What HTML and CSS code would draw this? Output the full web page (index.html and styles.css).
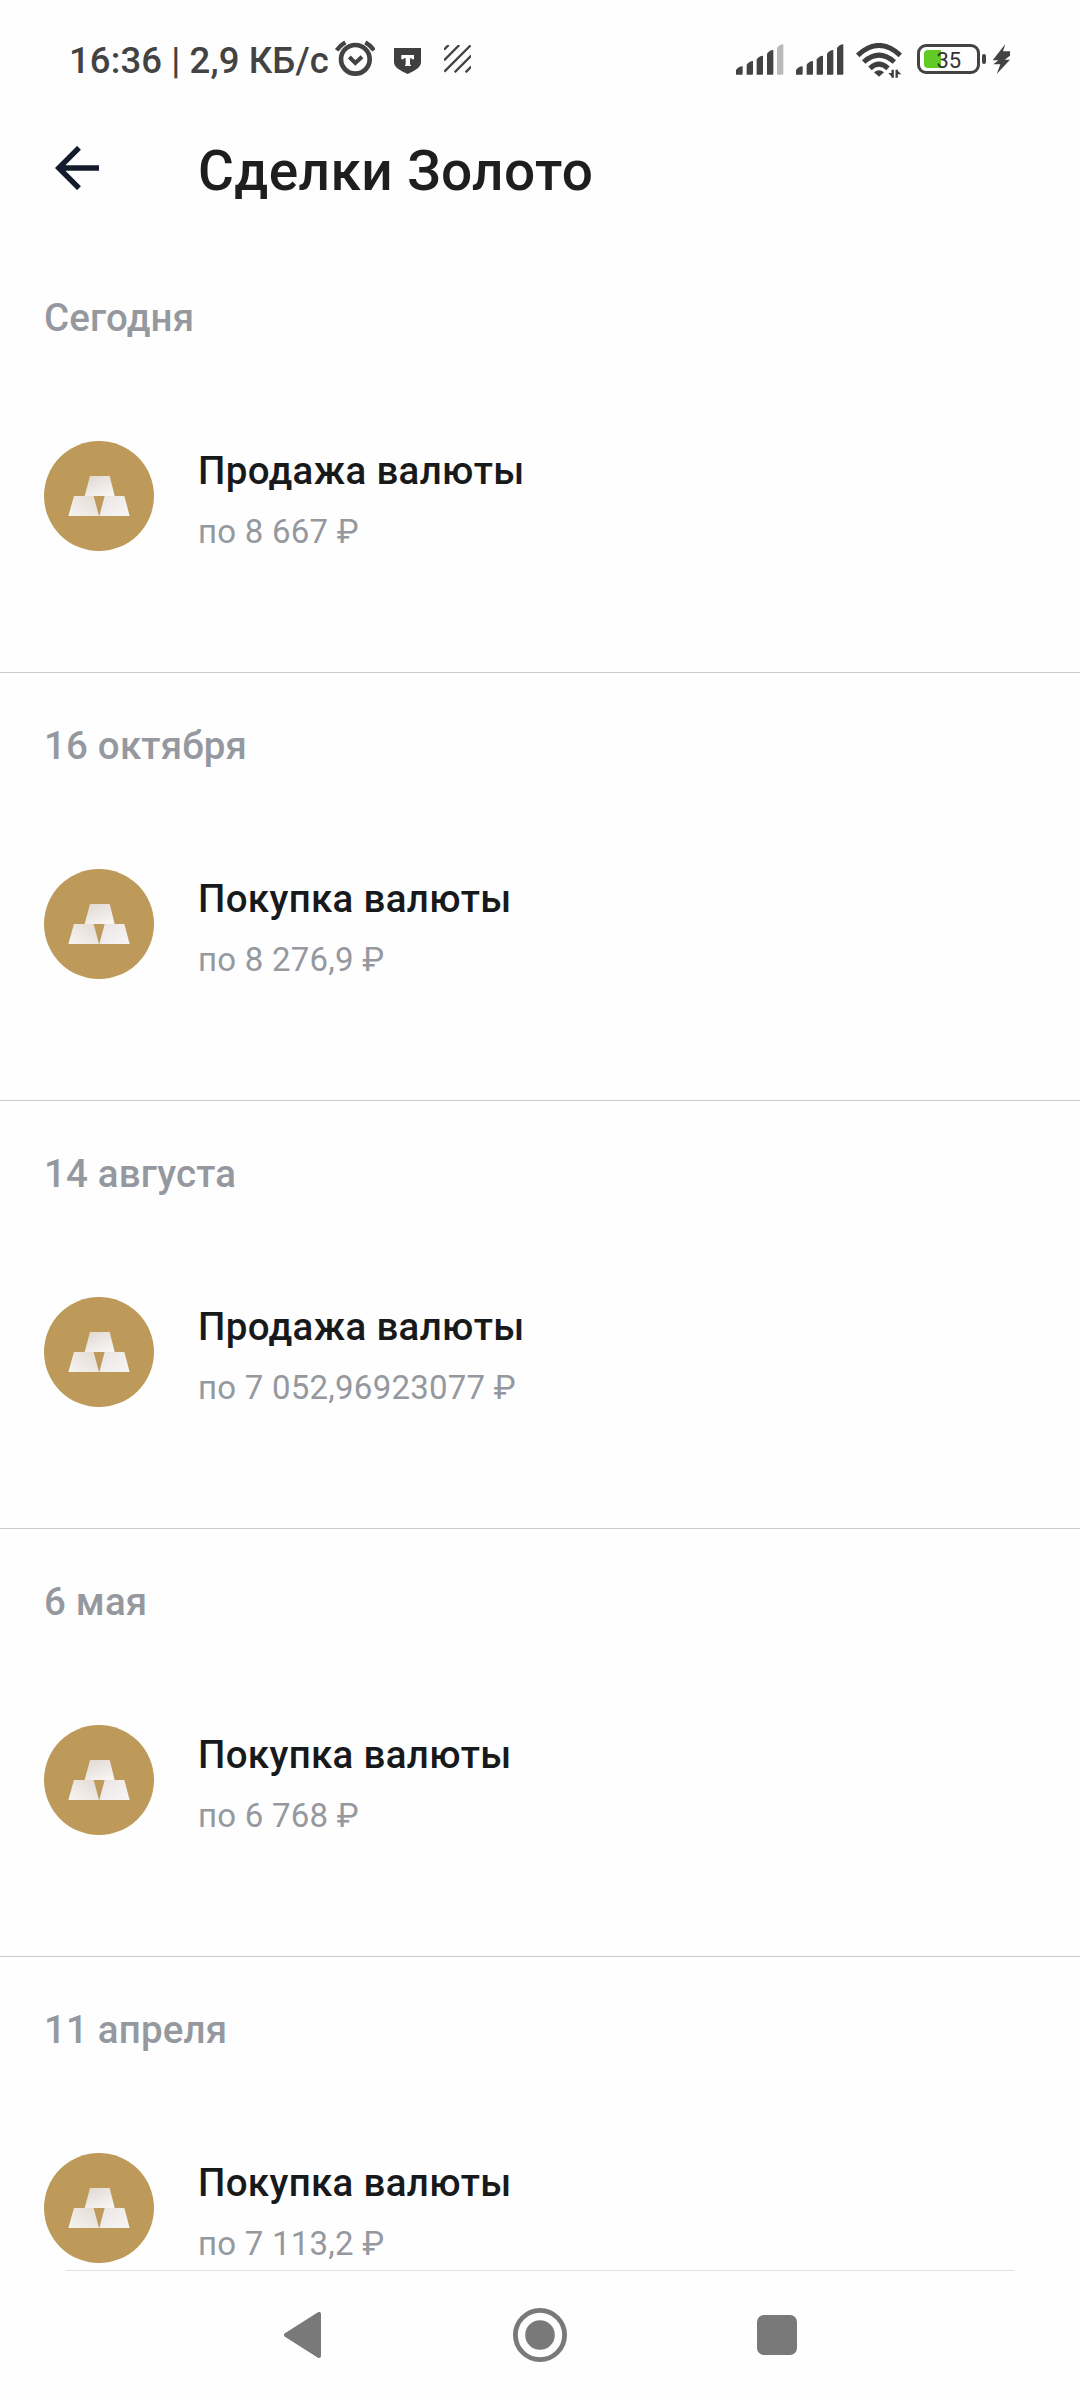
FILE: index.html
```html
<!DOCTYPE html>
<html lang="ru">
<head>
<meta charset="utf-8">
<title>Сделки Золото</title>
<link rel="stylesheet" href="styles.css">
</head>
<body>
<svg class="defs" width="0" height="0" aria-hidden="true">
  <defs>
    <linearGradient id="bar" x1="0" y1="1" x2="1" y2="0">
      <stop offset="0" stop-color="#f6f4f2"/><stop offset="1" stop-color="#e4dad3"/>
    </linearGradient>
    <linearGradient id="bar-right" x1="0" y1="0" x2="1" y2="1">
      <stop offset="0" stop-color="#ebe5e2"/><stop offset="1" stop-color="#f6f5f7"/>
    </linearGradient>
    <linearGradient id="bar-top" x1="0" y1="0" x2=".6" y2="1">
      <stop offset="0" stop-color="#e0d6cf"/><stop offset="1" stop-color="#f6f4f4"/>
    </linearGradient>
    <symbol id="gold" viewBox="0 0 330 330">
      <path fill="url(#bar-top)" d="M138 105h59l15 60h-90z"/>
      <path fill="url(#bar)" d="M90 165h59l16 60H73z"/>
      <path fill="url(#bar-right)" d="M182 165h59l16 60h-91z"/>
    </symbol>
  </defs>
</svg>
<div class="screen">
  <div class="status">
    <span class="clock">16:36 | 2,9 КБ/с</span>
    <svg class="alarm" viewBox="0 0 120 110" fill="none" stroke="#434343">
      <circle cx="61" cy="58" r="43" stroke-width="14"/>
      <path d="M43 51l18 18 20-19" stroke-width="12"/>
      <path d="M5 31Q15 16 31 7M117 31Q107 16 91 7" stroke-width="13"/>
    </svg>
    <svg class="shield" viewBox="0 0 81 78">
      <path fill="#3f3f3f" d="M0 0h81v42c0 15-15 24-40 36C15 66 0 57 0 42z"/>
      <path fill="#fefefe" d="M22 21h38v13h-7v-3h-5v19h3v4H33v-4h2V31h-6v3h-7z"/>
    </svg>
    <svg class="hatch" viewBox="0 0 82 82" fill="none" stroke="#434343" stroke-width="7">
      <path d="M0 14L14 0M0 46L46 0M1 80L80 1M32 82L82 32M65 82L82 65"/>
    </svg>
    <svg class="signal" viewBox="0 0 144 92" fill="#434343">
      <path d="M0 92V78q7-10 20-11v22q0 3-3 3z"/>
      <path d="M32 92V62q7-10 19-11v38q0 3-3 3z"/>
      <path d="M62 92V46q7-10 19-11v54q0 3-3 3z"/>
      <path d="M93 92V29q7-10 19-11v71q0 3-3 3z"/>
      <path fill="#b9b9b9" d="M123 92V12q7-10 19-11v88q0 3-3 3z"/>
    </svg>
    <svg class="signal second" viewBox="0 0 144 92" fill="#434343">
      <path d="M0 92V78q7-10 20-11v22q0 3-3 3z"/>
      <path d="M32 92V62q7-10 19-11v38q0 3-3 3z"/>
      <path d="M62 92V46q7-10 19-11v54q0 3-3 3z"/>
      <path d="M93 92V29q7-10 19-11v71q0 3-3 3z"/>
      <path d="M123 92V12q7-10 19-11v88q0 3-3 3z"/>
    </svg>
    <svg class="wifi" viewBox="0 0 138 105" fill="none" stroke="#3f3f3f" stroke-width="15">
      <path d="M5 37Q69-22 133 37M23 57Q69 16 115 57M42 76Q69 51 96 76"/>
      <path fill="#3f3f3f" stroke="none" d="M54 88q15-13 30 0L69 101z"/>
      <path stroke-width="7" d="M110 80v24M122 104V80"/>
      <path fill="#3f3f3f" stroke="none" d="M97 90h13v14zM122 80l14 14h-14z"/>
    </svg>
    <div class="battery">
      <div class="charge"></div>
      <span class="percent">35</span>
    </div>
    <div class="battery-tip"></div>
    <svg class="bolt" viewBox="0 0 56 90"><path fill="#434343" d="M40 0L2 49h17L4 61h21L14 90l40-43H38l16-12V22H33z"/></svg>
  </div>

  <header class="header">
    <svg class="back" viewBox="0 0 44 44" fill="none" stroke="#141b2d" stroke-width="5.4"><path d="M24 1.8L3.8 22 24 42.2M4 22h40"/></svg>
    <h1 class="title">Сделки Золото</h1>
  </header>

  <main class="deals">
    <section class="day">
      <h2 class="date">Сегодня</h2>
      <div class="deal">
        <svg class="coin"><use href="#gold"/></svg>
        <div class="info"><div class="name">Продажа валюты</div><div class="price">по 8 667 ₽</div></div>
      </div>
    </section>
    <section class="day">
      <h2 class="date">16 октября</h2>
      <div class="deal">
        <svg class="coin"><use href="#gold"/></svg>
        <div class="info"><div class="name">Покупка валюты</div><div class="price">по 8 276,9 ₽</div></div>
      </div>
    </section>
    <section class="day">
      <h2 class="date">14 августа</h2>
      <div class="deal">
        <svg class="coin"><use href="#gold"/></svg>
        <div class="info"><div class="name">Продажа валюты</div><div class="price">по 7 052,96923077 ₽</div></div>
      </div>
    </section>
    <section class="day">
      <h2 class="date">6 мая</h2>
      <div class="deal">
        <svg class="coin"><use href="#gold"/></svg>
        <div class="info"><div class="name">Покупка валюты</div><div class="price">по 6 768 ₽</div></div>
      </div>
    </section>
    <section class="day">
      <h2 class="date">11 апреля</h2>
      <div class="deal">
        <svg class="coin"><use href="#gold"/></svg>
        <div class="info"><div class="name">Покупка валюты</div><div class="price">по 7 113,2 ₽</div></div>
      </div>
    </section>
  </main>

  <nav class="nav">
    <svg class="nav-back" viewBox="0 0 37 46"><path fill="#797979" stroke="#797979" stroke-width="4" stroke-linejoin="round" d="M2 23L35 2v42z"/></svg>
    <svg class="nav-home" viewBox="0 0 54 54"><circle cx="27" cy="27" r="24.6" fill="none" stroke="#797979" stroke-width="4.8"/><circle cx="27" cy="27" r="14.8" fill="#797979"/></svg>
    <div class="nav-recent"></div>
  </nav>
</div>
</body>
</html>
```
FILE: styles.css
```css
* { box-sizing: border-box; }
body {
  margin: 0;
  background: #fefefe;
  font-family: Roboto, "Noto Sans", sans-serif;
}
svg { display: block; flex: none; }
h1, h2 { margin: 0; font-weight: 500; }
.defs { position: absolute; }
.screen {
  width: 1080px;
  height: 2400px;
  display: flex;
  flex-direction: column;
  overflow: hidden;
}

.status {
  height: 120px;
  padding: 0 69px 0 69px;
  display: flex;
  align-items: flex-start;
  flex: none;
}
.clock {
  width: 266px;
  margin-top: 38.5px;
  font-size: 36.5px;
  line-height: 44px;
  font-weight: 500;
  letter-spacing: .1px;
  color: #434343;
  white-space: nowrap;
}
.alarm { width: 40px; height: 36.7px; margin-top: 40px; }
.shield { width: 27px; height: 26px; margin: 48px 0 0 18.7px; }
.hatch { width: 27.3px; height: 27.3px; margin: 45.3px 0 0 23px; }
.signal { width: 48px; height: 30.7px; margin: 44.3px 0 0 auto; }
.signal.second { margin-left: 12px; }
.wifi { width: 46px; height: 35px; margin: 42.5px 0 0 12.5px; }
.battery {
  position: relative;
  width: 63px;
  height: 30px;
  margin: 44px 0 0 15px;
  border: 3px solid #434343;
  border-radius: 9px;
  flex: none;
}
.charge {
  width: 17px;
  height: 18px;
  margin: 3px 0 0 4px;
  border-radius: 4px 0 0 4px;
  background: #62c925;
}
.percent {
  position: absolute;
  inset: 1px 0 0 0;
  text-align: center;
  font-size: 22px;
  line-height: 25px;
  color: #333;
}
.battery-tip { width: 4px; height: 10px; margin: 54px 0 0 2px; border-radius: 2px; background: #434343; flex: none; }
.bolt { width: 18.7px; height: 30px; margin: 44px 0 0 6px; }

.header {
  height: 125px;
  padding: 0 55px;
  display: flex;
  align-items: flex-start;
  flex: none;
}
.back { width: 44px; height: 44px; margin-top: 26px; }
.title {
  margin: 18px 0 0 99px;
  font-size: 55px;
  line-height: 66px;
  letter-spacing: .4px;
  color: #1e1e1e;
}

.deals { height: 2025px; overflow: hidden; flex: none; }
.day { height: 428px; padding: 50px 44px 0; border-bottom: 1px solid #c9c9cb; }
.date { font-size: 38.5px; line-height: 46px; letter-spacing: .18px; color: #95999f; }
.deal { display: flex; gap: 44px; margin-top: 100px; }
.coin { width: 110px; height: 110px; border-radius: 50%; background: #bd9a5a; }
.info { padding-top: 7px; white-space: nowrap; }
.name { font-size: 38.5px; line-height: 46px; font-weight: 500; letter-spacing: .33px; color: #18191b; }
.price { margin-top: 18px; font-size: 33px; line-height: 40px; letter-spacing: .24px; color: #95999f; }

.nav {
  height: 130px;
  margin: 0 66px;
  padding: 0 217px 2px 218px;
  border-top: 1px solid #e2e2e2;
  display: flex;
  align-items: center;
  justify-content: space-between;
  flex: none;
}
.nav-back { width: 37px; height: 46px; }
.nav-home { width: 54px; height: 54px; margin-left: 1px; }
.nav-recent { width: 40px; height: 40px; border-radius: 7px; background: #797979; }
```
